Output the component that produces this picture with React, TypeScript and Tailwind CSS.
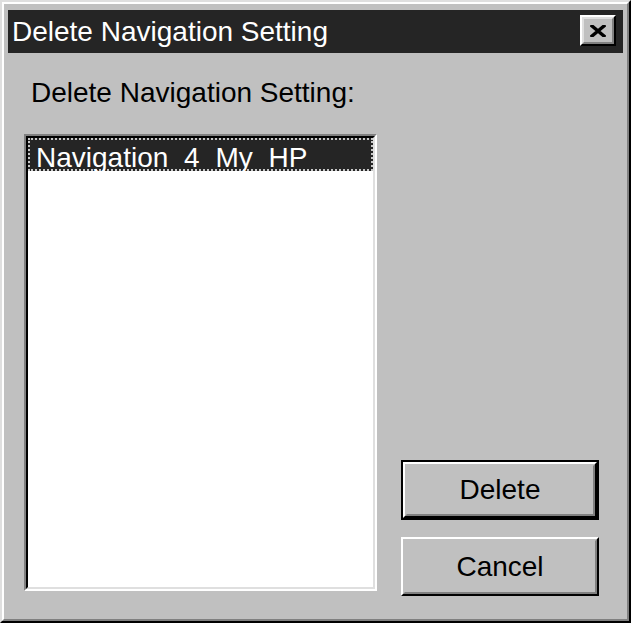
import React from "react"

function CloseButton() {
  return (
    <div className="mt-[5px] w-[36px] h-[31px] border-2 border-t-white border-l-white border-r-black border-b-black">
      <div className="w-full h-full bg-[#c0c0c0] border-2 border-t-[#dfdfdf] border-l-[#dfdfdf] border-r-[#808080] border-b-[#808080] flex items-center justify-center">
        <svg width="16" height="12" viewBox="0 0 16 12" className="mt-[1px]">
          <path d="M2 1 L14 11 M14 1 L2 11" stroke="#000" strokeWidth="3.4" strokeLinecap="square" fill="none" />
        </svg>
      </div>
    </div>
  )
}

function Button({ label, isDefault }: { label: string; isDefault?: boolean }) {
  const inner = (
    <div className="w-full h-full border-2 border-t-white border-l-white border-r-black border-b-black">
      <div className="w-full h-full bg-[#c0c0c0] border-2 border-t-[#c0c0c0] border-l-[#c0c0c0] border-r-[#808080] border-b-[#808080] flex items-center justify-center text-[28px] leading-none text-black">
        {label}
      </div>
    </div>
  )
  if (isDefault) {
    return <div className="w-[198px] h-[60px] border-2 border-black">{inner}</div>
  }
  return <div className="w-[198px] h-[59px]">{inner}</div>
}

export default function App() {
  return (
    <div className="w-[631px] h-[623px] bg-[#c0c0c0] border-2 border-t-[#dfdfdf] border-l-[#dfdfdf] border-r-black border-b-black font-['Liberation_Sans',Arial,sans-serif]">
      <div className="h-full border-2 border-t-white border-l-white border-r-[#808080] border-b-[#808080] px-[4px] pt-[6px] flex flex-col">
        <div className="h-[43px] shrink-0 bg-[#252525] flex items-start justify-between pl-[4px] pr-[7px]">
          <span className="mt-[8px] text-white text-[28px] leading-none">Delete Navigation Setting</span>
          <CloseButton />
        </div>

        <div className="flex-1 flex items-stretch pl-[16px] pr-[24px] pb-[23px]">
          <div className="w-[353px] flex flex-col pb-[5px]">
            <div className="mt-[24px] ml-[7px] text-[28px] leading-[32px] text-black">Delete Navigation Setting:</div>
            <div className="mt-[25px] flex-1 border-2 border-t-[#808080] border-l-[#808080] border-r-white border-b-white">
              <div className="w-full h-full bg-white border-2 border-t-black border-l-black border-r-[#dfdfdf] border-b-[#dfdfdf]">
                <div className="h-[33px] bg-[#252525] border-2 border-dotted border-[#c8c8c8] pl-[6px] pt-[5px] text-white text-[28px] leading-[26px] [word-spacing:8px]">
                  Navigation 4 My HP
                </div>
              </div>
            </div>
          </div>

          <div className="ml-[24px] flex flex-col justify-end gap-[17px]">
            <Button label="Delete" isDefault />
            <Button label="Cancel" />
          </div>
        </div>
      </div>
    </div>
  )
}
